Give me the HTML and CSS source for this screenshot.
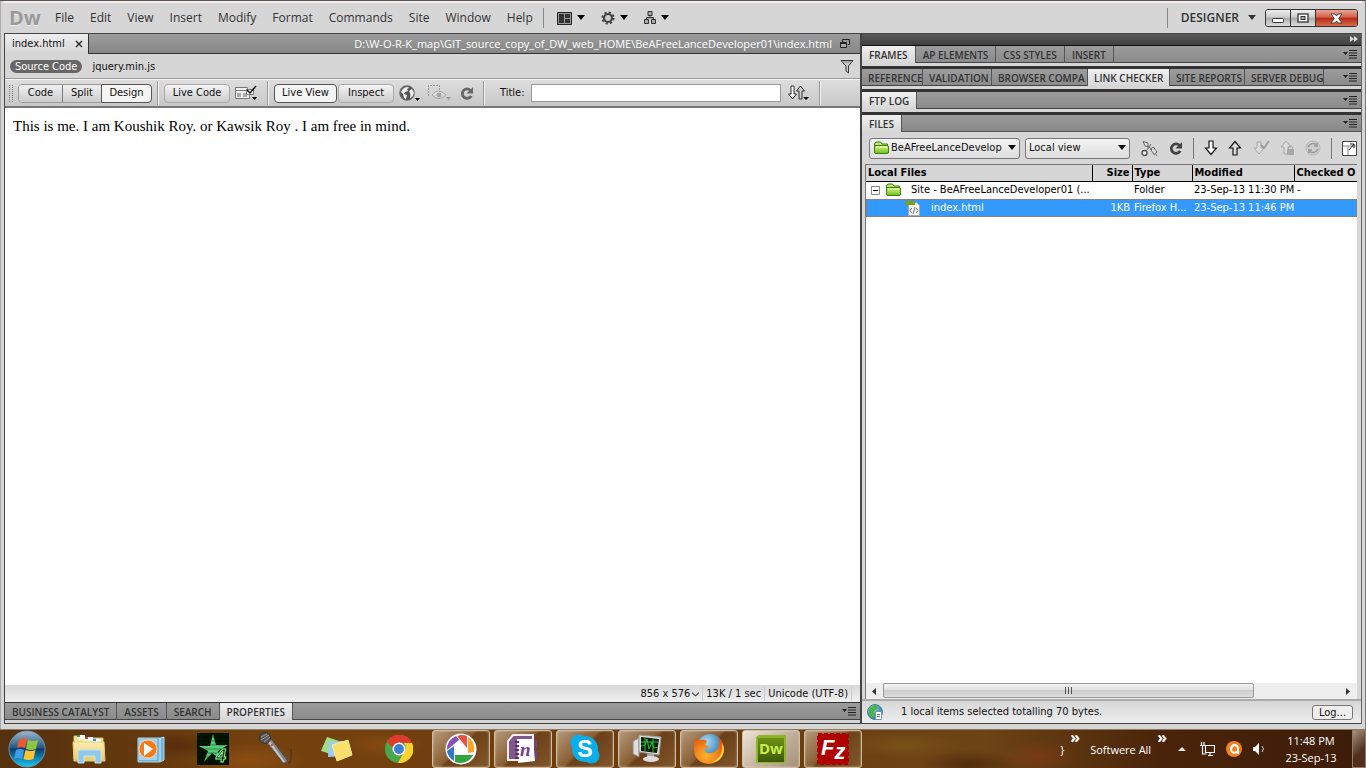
FILE: index.html
```html
<!DOCTYPE html>
<html lang="en">
<head>
<meta charset="utf-8">
<title>index.html - Dreamweaver</title>
<link rel="stylesheet" href="styles.css">
</head>
<body>
<svg class="defs" aria-hidden="true">
  <defs>
    <linearGradient id="g-orb" x1="0" y1="0" x2="0" y2="1"><stop offset="0" stop-color="#9fb9cc"/><stop offset=".45" stop-color="#2a5a86"/><stop offset=".5" stop-color="#0c3c6c"/><stop offset="1" stop-color="#16c8f8"/></linearGradient>
    <linearGradient id="g-folder" x1="0" y1="0" x2="0" y2="1"><stop offset="0" stop-color="#fdf0b4"/><stop offset="1" stop-color="#e8c964"/></linearGradient>
    <linearGradient id="g-green" x1="0" y1="0" x2="0" y2="1"><stop offset="0" stop-color="#d4f58a"/><stop offset="1" stop-color="#6cc11c"/></linearGradient>
    <linearGradient id="g-dw" x1="0" y1="0" x2="0" y2="1"><stop offset="0" stop-color="#6e9416"/><stop offset="1" stop-color="#3c5808"/></linearGradient>
    <radialGradient id="g-fire" cx=".4" cy=".7" r=".8"><stop offset="0" stop-color="#ffb52a"/><stop offset="1" stop-color="#e0480c"/></radialGradient>
    <radialGradient id="g-globe" cx=".35" cy=".3" r=".8"><stop offset="0" stop-color="#a9dcf2"/><stop offset="1" stop-color="#1464a4"/></radialGradient>
    <symbol id="panel-menu" viewBox="0 0 14 9"><path d="M0 2h5L2.500 5z" fill="#222"/><path d="M6 .5h8M6 3h8M6 5.500h8M6 8h8" stroke="#222"/></symbol>
    <symbol id="reload" viewBox="0 0 16 16"><path d="M12.500 5A5 5 0 1 0 13 10.500" fill="none" stroke="currentColor" stroke-width="3"/><path d="M15 1v7H8z" fill="currentColor"/></symbol>
    <symbol id="folder" viewBox="0 0 17 14"><path d="M1.500 11V3l1.500-2h4.500L9 3h5.500v3" fill="#b9e86c" stroke="#3f7d0c"/><rect x="1.500" y="4.500" width="14" height="8" rx="1.500" fill="url(#g-green)" stroke="#3f7d0c"/><path d="M3 6h11" stroke="#f0fccb"/></symbol>
    <symbol id="down" viewBox="0 0 14 16"><path d="M5 1h4v7h3.500L7 14.500 1.500 8H5z" fill="#fff" stroke="currentColor" stroke-width="1.200"/></symbol>
    <symbol id="up" viewBox="0 0 14 16"><path d="M5 15h4V8h3.500L7 1.500 1.500 8H5z" fill="#ddd" stroke="currentColor" stroke-width="1.200"/></symbol>
    <symbol id="caret" viewBox="0 0 8 6"><path d="M0 0h8L4 5z" fill="currentColor"/></symbol>
  </defs>
</svg>

<div class="window">
  <header class="menubar">
    <span class="logo">Dw</span>
    <nav class="menus">
      <button>File</button><button>Edit</button><button>View</button><button>Insert</button><button>Modify</button><button>Format</button><button>Commands</button><button>Site</button><button>Window</button><button>Help</button>
    </nav>
    <div class="menu-tools">
      <button aria-label="Layout"><svg width="15" height="13"><path d="M.5.5h14v12H.5z" fill="#999" stroke="#222"/><path d="M2 2h5v9H2zM8 2h5v4H8zM8 7h5v4H8z" fill="#333"/></svg><svg class="caret" width="8" height="6"><use href="#caret"/></svg></button>
      <button aria-label="Extend"><svg width="14" height="14" viewBox="0 0 14 14"><circle cx="7" cy="7" r="4" fill="#ccc" stroke="#444" stroke-width="2.200"/><circle cx="7" cy="7" r="5.600" fill="none" stroke="#444" stroke-width="2" stroke-dasharray="2.200 2.200"/></svg><svg class="caret" width="8" height="6"><use href="#caret"/></svg></button>
      <button aria-label="Site"><svg width="12" height="14"><path d="M4 .5h4v4H4zM.5 8.500h4v4h-4zM7.500 8.500h4v4h-4zM6 5v2M2.500 8V6.500h7V8" fill="#aaa" stroke="#333"/></svg><svg class="caret" width="8" height="6"><use href="#caret"/></svg></button>
    </div>
    <div class="workspace">
      <button class="designer">DESIGNER<svg width="8" height="6"><use href="#caret"/></svg></button>
      <div class="winbtns">
        <button aria-label="Minimize"><svg width="13" height="6"><rect x=".5" y=".5" width="11" height="4" rx="1" fill="#fff" stroke="#333"/></svg></button>
        <button aria-label="Restore"><svg width="12" height="10"><rect x="1" y="1" width="10" height="8" fill="#fff" stroke="#333" stroke-width="1.300"/><rect x="4" y="3.500" width="4" height="3" fill="#aaa" stroke="#333"/></svg></button>
        <button class="close" aria-label="Close"><svg width="13" height="11"><path d="M1 1h4l1.500 2L8 1h4L8.700 5.500 12 10H8L6.500 8 5 10H1l3.300-4.500z" fill="#fff" stroke="#444"/></svg></button>
      </div>
    </div>
  </header>

  <div class="workarea">
    <main class="document">
      <div class="doctabs">
        <div class="doctab"><span>index.html</span><button aria-label="Close tab"><svg width="8" height="8"><path d="m1 1 6 6M7 1 1 7" stroke="#222" stroke-width="1.300"/></svg></button></div>
        <span class="path">D:\W-O-R-K_map\GIT_source_copy_of_DW_web_HOME\BeAFreeLanceDeveloper01\index.html</span>
        <svg width="10" height="9"><path d="M2.500 3V.500h7v5H8" fill="none" stroke="#222"/><path d="M.5 3.500h6v5h-6zM.5 4.500h6" fill="#aaa" stroke="#222"/></svg>
      </div>
      <div class="related">
        <button class="pill">Source Code</button><button class="plain">jquery.min.js</button>
        <svg class="filter" width="14" height="15"><path d="M1 1.500h12L8.500 7v7L6 12V7z" fill="#ccc" stroke="#333"/><path d="M2 3h10" stroke="#888"/></svg>
      </div>
      <div class="toolbar">
        <i class="grip"></i>
        <div class="segmented"><button class="w-code">Code</button><button class="w-split">Split</button><button class="w-design on">Design</button></div>
        <i class="sep"></i>
        <button class="btn w-livecode">Live Code</button>
        <button class="tool" aria-label="Code options"><svg width="23" height="16"><path d="M.5 2.500h12v3H.5zM.5 5.500h14v8H.5z" fill="#eee" stroke="#777"/><path d="M2 8h4v4H2zM8 8h4v4H8z" fill="#aaa"/><path d="M11.500 4.500h7v5h-7z" fill="#fff" stroke="#777"/><path d="m12 5 3 3 6-7" fill="none" stroke="#111" stroke-width="1.500"/><path d="M17 12h5l-2.500 3z"/></svg></button>
        <i class="sep"></i>
        <button class="btn on w-liveview">Live View</button><button class="btn w-inspect">Inspect</button>
        <button class="tool" aria-label="Preview in browser"><svg width="21" height="17"><circle cx="8" cy="8" r="7" fill="#555" stroke="#666" stroke-width="1.500"/><path d="M3 5q2-3 6-3l1 1-2 1 1 2-3 1-1 2 3 1-1 4-2-1-1-4-2-2zM10 6l3-2 2 4-2 4-2 1 .5-4z" fill="#eee"/><path d="M16 13h5l-2.500 3z"/></svg></button>
        <button class="tool dim" aria-label="Visual aids"><svg width="23" height="17"><path d="M.5 11V.500h11V5" fill="none" stroke="#888" stroke-dasharray="2 1"/><path d="M4 10q6-8 14 0-7 7-14 0z" fill="#ddd" stroke="#999"/><circle cx="11" cy="10" r="2.500" fill="#999"/><path d="M18 12h5l-2.500 3z" fill="#888"/></svg></button>
        <button class="tool" aria-label="Refresh"><svg class="reload" width="15" height="15"><use href="#reload"/></svg></button>
        <i class="sep"></i>
        <label for="title">Title:</label><input id="title" type="text">
        <button class="tool" aria-label="File management"><svg width="22" height="17"><path d="M3 1h3v8h2.500l-4 5-4-5H3z" fill="#fff" stroke="#333"/><path d="M11 14V6H8.500l4-5 4 5H14v8z" fill="#ccc" stroke="#333"/><path d="M15 12h6l-3 3z"/></svg></button>
        <i class="sep"></i>
      </div>
      <article class="page">This is me. I am Koushik Roy. or Kawsik Roy . I am free in mind.</article>
      <div class="docstatus"><span class="size">856 x 576 <svg width="7" height="6"><path d="m0 1 3.500 3L7 1v1.500L3.500 5.500 0 2.500z" fill="#444"/></svg></span><span>13K / 1 sec</span><span>Unicode (UTF-8)</span></div>
      <div class="tabs bottom"><button>BUSINESS CATALYST</button><button>ASSETS</button><button>SEARCH</button><button class="on">PROPERTIES</button><svg class="pm" width="14" height="9"><use href="#panel-menu"/></svg></div>
    </main>

    <aside class="panels">
      <div class="collapse"><svg width="8" height="7"><path d="m0 0 4 3-4 3zM4 0l4 3-4 3z" fill="#ddd"/></svg></div>
      <div class="tabs"><button class="on">FRAMES</button><button>AP ELEMENTS</button><button>CSS STYLES</button><button>INSERT</button><svg class="pm" width="14" height="9"><use href="#panel-menu"/></svg></div>
      <div class="tabs fixed"><button class="w-ref">REFERENCE</button><button class="w-val">VALIDATION</button><button class="w-bro">BROWSER COMPA</button><button class="on w-link">LINK CHECKER</button><button class="w-site">SITE REPORTS</button><button class="w-srv">SERVER DEBUG</button><svg class="pm" width="14" height="9"><use href="#panel-menu"/></svg></div>
      <div class="tabs"><button class="on">FTP LOG</button><svg class="pm" width="14" height="9"><use href="#panel-menu"/></svg></div>
      <div class="tabs last"><button class="on">FILES</button><svg class="pm" width="14" height="9"><use href="#panel-menu"/></svg></div>
      <div class="filebar">
        <label class="picker site"><svg width="17" height="14"><use href="#folder"/></svg><select aria-label="Site"><option>BeAFreeLanceDevelop</option></select><svg class="arrow" width="8" height="6"><use href="#caret"/></svg></label>
        <label class="picker view"><select aria-label="View"><option>Local view</option></select><svg class="arrow" width="8" height="6"><use href="#caret"/></svg></label>
        <div class="filetools">
          <button aria-label="Connect"><svg width="17" height="17"><path d="M2 1.500 7 3v4L4 6zM7 6l4 4M9.500 9l3-2 3.500 5-3 2.500z" fill="#ddd" stroke="#666"/><path d="m6 10 4-6" stroke="#666"/><circle cx="3.500" cy="13" r="2.500" fill="#eee" stroke="#555" stroke-width="1.400"/><path d="m14 13 2 3" stroke="#777"/></svg></button>
          <button aria-label="Refresh files"><svg class="dark" width="15" height="15"><use href="#reload"/></svg></button>
          <i class="fsep"></i>
          <button aria-label="Get files"><svg width="14" height="16"><use href="#down"/></svg></button>
          <button aria-label="Put files"><svg width="14" height="16"><use href="#up"/></svg></button>
          <button class="dim" aria-label="Check out"><svg width="17" height="16"><path d="M4 2h4v6h3l-5 6-5-6h3z" fill="#ddd" stroke="#999"/><path d="m8 5 3 3 5-7" fill="none" stroke="#888" stroke-width="1.800"/></svg></button>
          <button class="dim" aria-label="Check in"><svg width="15" height="16"><path d="M4 14V7H1l5-6 5 6H8v7z" fill="#ddd" stroke="#999"/><path d="M7 9h7v6H7z" fill="#999"/><path d="M8.500 9V7q2-3 4 0v2" fill="none" stroke="#999"/></svg></button>
          <button class="dim" aria-label="Synchronize"><svg width="16" height="16"><circle cx="8" cy="8" r="7" fill="#ccc" stroke="#aaa"/><path d="M3 7q4-6 9-2V3M13 9q-4 6-9 2v2M9 6h4M3 10h4" fill="none" stroke="#888" stroke-width="1.500"/></svg></button>
          <i class="fsep"></i>
          <button aria-label="Expand"><svg width="15" height="15"><path d="M.5.5h14v14H.5z" fill="#fff" stroke="#444"/><path d="M1 5h13M6 5v9" stroke="#888"/><path d="m7 9 5-6M8 3h4v4" fill="none" stroke="#222"/></svg></button>
        </div>
      </div>
      <div class="filelist">
        <table>
          <colgroup><col class="c-name"><col class="c-size"><col class="c-type"><col class="c-mod"><col></colgroup>
          <thead><tr><th>Local Files</th><th class="num">Size</th><th>Type</th><th>Modified</th><th>Checked O</th></tr></thead>
          <tbody>
            <tr><td><div class="cell"><svg width="9" height="9"><path d="M.5.5h8v8h-8z" fill="#fff" stroke="#888"/><path d="M2 4.500h5" stroke="#000"/></svg><svg width="17" height="14"><use href="#folder"/></svg><span class="sitename">Site - BeAFreeLanceDeveloper01 (...</span></div></td><td></td><td>Folder</td><td>23-Sep-13 11:30 PM</td><td>-</td></tr>
            <tr class="selected"><td><div class="cell file"><svg width="16" height="16"><path d="M3.500 2.500h8l3 3v10h-11z" fill="#f4f4f0" stroke="#aaa"/><path d="M0 1h10v4H0z" fill="#7da116"/><path d="m7 8-2 2.500L7 13M11 8l2 2.500-2 2.500M10 7l-2 7" fill="none" stroke="#777"/></svg><span>index.html</span></div></td><td class="num">1KB</td><td>Firefox H...</td><td>23-Sep-13 11:46 PM</td><td></td></tr>
          </tbody>
        </table>
        <div class="hscroll"><svg width="5" height="7"><path d="M5 0v7L1 3.500z" fill="#333"/></svg><div class="track"><div class="thumb"><i></i><i></i><i></i></div></div><svg width="5" height="7"><path d="M0 0v7l4-3.500z" fill="#333"/></svg></div>
      </div>
      <div class="filestatus"><svg width="17" height="17"><circle cx="8" cy="8" r="7.500" fill="url(#g-globe)" stroke="#4a8298"/><path d="M2 5q3-4 7-4l2 3-4 3 1 4-3 3-3-4z" fill="#47b848"/><path d="M8.500 7.500h6v8h-6z" fill="#fff" stroke="#7893a4"/><path d="M10 10.500h3M10 12.500h3" stroke="#678"/></svg><span>1 local items selected totalling 70 bytes.</span><button>Log...</button></div>
    </aside>
  </div>
</div>

<footer class="taskbar">
  <button class="start" aria-label="Start"><svg width="38" height="38" viewBox="0 0 38 38"><circle cx="19" cy="19" r="18" fill="url(#g-orb)" stroke="#7391a5"/><path d="M11 10q4-3 8-1l-2 9q-4-2-8 0z" fill="#f0572a"/><path d="M20 10q5 2 10 0l-2 9q-5 2-10 0z" fill="#8cc63c"/><path d="M8 20q4-2 8 0l-2 9q-4-2-8 0z" fill="#3f9de8"/><path d="M17.500 20q5 2 10 0l-2 9q-5 2-10 0z" fill="#fdc42e"/></svg></button>
  <div class="apps">
    <button aria-label="Explorer"><svg width="34" height="32" viewBox="0 0 34 32"><path d="M2 3h10l1 2h18v21H2z" fill="#f5e3a0" stroke="#d9bd64"/><path d="M5 2h8v4H5zM12 4h9v4h-9zM20 6h9v4h-9z" fill="#fff"/><path d="M5 2h3v2H5z" fill="#2ca52c"/><path d="M13 4h3v2h-3z" fill="#d8452a"/><path d="M21 6h3v2h-3z" fill="#2a90d8"/><path d="M1 9h31l1 19H2z" fill="url(#g-folder)" stroke="#e6cd78"/><path d="M6 30V19q0-2 2-2h19q2 0 2 2v11h-6v-7H12v7z" fill="#8fc8e8" stroke="#bfe4f8"/></svg></button>
    <button aria-label="Media Player"><svg width="28" height="27" viewBox="0 0 28 27"><path d="M1 2h22l4-1v23l-4 2H1z" fill="#74b4dc" stroke="#a8d7ee"/><path d="M23 2v23" stroke="#d2edfa"/><path d="M2 3h18v21H2z" fill="#a6d2ea"/><circle cx="11" cy="13" r="9" fill="#f47a1a" stroke="#fdd0a0"/><path d="m7 7 9 6-9 7z" fill="#fff"/></svg></button>
    <button aria-label="Star"><svg width="32" height="32" viewBox="0 0 32 32"><path d="M0 0h32v32H0z" fill="#001400"/><path d="m16 1 3 11 12 0-10 6 1 7-7-5-8 9 4-11-9-5h11z" fill="#54cc74"/><path d="M0 4h32M0 8h32M0 12h32M0 16h32M0 20h32M0 24h32M0 28h32" stroke="#000" opacity=".35"/><text x="19" y="29" class="t-four">4</text></svg></button>
    <button aria-label="Microphone"><svg width="34" height="34" viewBox="0 0 34 34"><path d="m7 9 5-4 18 24-4 3z" fill="#858585" stroke="#454545"/><path d="m10 8 16 22" stroke="#c8c8c8" stroke-width="2"/><circle cx="7" cy="6" r="5.500" fill="#555" stroke="#333"/><path d="m3 5 6-3M3 8l8-5M6 10l6-5" stroke="#999"/><circle cx="14" cy="13" r="1" fill="#f22"/><path d="M30 31q4 2 3-14" fill="none" stroke="#333"/></svg></button>
    <button aria-label="Sticky Notes"><svg width="32" height="26" viewBox="0 0 32 26"><path d="m6 1 12 4-5 14-13-4z" fill="#a0dc88"/><path d="m8 6 13-1 1 15-15 1z" fill="#9ccdf4"/><path d="m11 9 16-5 4 15-15 6z" fill="#fbdf6b" stroke="#ffe99a"/></svg></button>
    <button aria-label="Chrome"><svg width="28" height="28" viewBox="0 0 28 28"><circle cx="14" cy="14" r="14" fill="#4aa84c"/><path d="M2 7A14 14 0 0 1 27 8H14a6 6 0 0 0-6 5z" fill="#de3a2e"/><path d="M27 8A14 14 0 0 1 13 28l6-11a6 6 0 0 0 0-9z" fill="#fbd22f"/><circle cx="14" cy="14" r="6.500" fill="#fff"/><circle cx="14" cy="14" r="5" fill="#3f7fd0"/></svg></button>
    <button class="open" aria-label="Picasa"><svg width="32" height="32" viewBox="0 0 32 32"><circle cx="16" cy="16" r="15.500" fill="#fff"/><path d="M11 3A14 14 0 0 0 2 17l12-10z" fill="#8851b8"/><path d="M12 3a14 14 0 0 1 10 0v12z" fill="#ea5146"/><path d="M23 4a14 14 0 0 1 6 15l-6 1z" fill="#f7a42b"/><path d="M10 22h18A14 14 0 0 1 10 29z" fill="#32a543"/><path d="m2 18 7-5v15A14 14 0 0 1 2 18z" fill="#3476c8"/></svg></button>
    <button class="open" aria-label="OneNote"><svg width="32" height="30" viewBox="0 0 32 30"><path d="M6 1h20v25H1V7z" fill="#80588e" stroke="#eee" stroke-width="2"/><path d="M27 6h3v7l-2 2 2 3v8h-3z" fill="#73437d"/><path d="M10 5h16l2 22-17 2z" fill="#fff"/><path d="M8 8h4M8 12h4M8 16h4M8 20h4M8 24h4" stroke="#573066" stroke-width="2"/><text x="13" y="22" class="t-one">n</text></svg></button>
    <button class="open" aria-label="Skype"><svg width="30" height="30" viewBox="0 0 30 30"><circle cx="15" cy="15" r="13" fill="#0baee8"/><circle cx="8.500" cy="8.500" r="8" fill="#0baee8"/><circle cx="21.500" cy="21.500" r="8" fill="#0baee8"/><text x="15" y="23" class="t-skype">S</text></svg></button>
    <button class="open" aria-label="Monitor"><svg width="32" height="30" viewBox="0 0 32 30"><path d="m2 7 6-3v19l-6-3z" fill="#ddd" stroke="#888"/><path d="m8 1 22 2-2 18-20-3z" fill="#d8dad8" stroke="#999"/><path d="m10 3 18 2-2 14-16-2z" fill="#0a200c"/><path d="m10 12 4-1 2-6 2 10 3-7 2 6 4-1M10 8h17M14 4v13M22 5v13" fill="none" stroke="#31b53c"/><path d="M16 20h7v4h-7z" fill="#aaa"/><ellipse cx="20" cy="25" rx="8" ry="3" fill="#ddd"/></svg></button>
    <button class="open" aria-label="Firefox"><svg width="32" height="32" viewBox="0 0 32 32"><circle cx="17" cy="14" r="13" fill="url(#g-globe)"/><path d="M2 6q3-1 5 1 4-1 7 1l-2 4q4 1 4 3l-5 1q1 5 7 4 6-1 8-8 1-5-2-9 6 5 7 12 0 14-15 16Q2 30 1 17 1 10 2 6z" fill="url(#g-fire)"/><path d="M29 10q2 15-12 20 12-1 14-12 0-5-2-8z" fill="#fdd240"/></svg></button>
    <button class="open active" aria-label="Dreamweaver"><svg width="30" height="28" viewBox="0 0 30 28"><path d="M0 2 3 0h27v26l-3 2H0z" fill="#8eb52a"/><path d="M2 3h26v24H2z" fill="url(#g-dw)"/><text x="15" y="19" class="t-dw">Dw</text></svg></button>
    <button class="open" aria-label="FileZilla"><svg width="32" height="32" viewBox="0 0 32 32"><path d="M1 1h30v30H1z" fill="#b00000" stroke="#b00000" stroke-width="2" stroke-dasharray="4 2"/><text x="4" y="22" class="t-fz">F<tspan dy="4">z</tspan></text></svg></button>
  </div>
  <div class="tray">
    <span class="brace">}</span><span class="chev">»</span><span class="soft">Softwere All</span><span class="chev">»</span>
    <svg width="8" height="4"><path d="M0 4h8L4 0z" fill="#eee"/></svg>
    <svg class="net" width="15" height="14"><path d="M5.500 3.500h9v7h-9zM8 13.500h5M10 11v2M0 3.500h5M1.500 0v3M4 0v3M2.500 4v8h4" fill="none" stroke="#fff" stroke-width="1.200"/></svg>
    <svg width="16" height="16"><circle cx="8" cy="8" r="8" fill="#f48120"/><path d="M11 11q-5 2-6-2 0-4 3-5 4 0 4 4v5" fill="none" stroke="#fff" stroke-width="2"/></svg>
    <svg width="13" height="12"><path d="M0 4h2l4-4v12L2 8H0z" fill="#fff"/><path d="M9 3q3 3 0 6" fill="none" stroke="#ccc"/></svg>
    <time>11:48 PM<br>23-Sep-13</time>
    <button class="desktop" aria-label="Show desktop"></button>
  </div>
</footer>
</body>
</html>
```
FILE: styles.css
```css
* { box-sizing: border-box; }
html, body { height: 100%; margin: 0; }
body { display: flex; flex-direction: column; overflow: hidden; background: #d6d6d6; color: #111; font: 11px/14px "DejaVu Sans Condensed", "Noto Sans", sans-serif; }
button { margin: 0; padding: 0; border: 0; background: none; color: inherit; font: inherit; white-space: nowrap; }
svg { display: block; flex: none; }
.defs { position: absolute; width: 0; height: 0; }

.window { flex: 1; min-height: 0; display: flex; flex-direction: column; padding: 0 4px 5px; background: #d6d6d6; border-top: 1px solid #5c5351; box-shadow: inset 1px 0 #aaa, inset -1px 0 #777; }

/* menu bar */
.menubar { flex: none; height: 32px; display: flex; align-items: center; border-top: 2px solid #f0f0f0; font: 12px/16px "Open Sans", sans-serif; color: #333; }
.logo { width: 44px; padding-left: 5px; font: bold 20px/24px "Open Sans", sans-serif; color: #999; text-shadow: 0 1px #eee; }
.menus { display: flex; gap: 16px; padding-left: 7px; }
.menu-tools { display: flex; gap: 16px; height: 20px; margin-left: 10px; padding-left: 13px; border-left: 1px solid #888; }
.menu-tools button { display: flex; align-items: center; gap: 5px; }
.menu-tools .caret { color: #000; }
.workspace { margin-left: auto; display: flex; align-items: center; height: 20px; padding-left: 13px; border-left: 1px solid #888; }
.designer { display: flex; align-items: center; gap: 9px; font-size: 12px; font-weight: 600; }
.winbtns { display: flex; margin: 0 4px 0 9px; border: 1px solid #333; border-radius: 3px; overflow: hidden; }
.winbtns button { width: 25px; height: 16px; display: flex; align-items: center; justify-content: center; border-right: 1px solid #333; background: linear-gradient(#eee, #ccc 45%, #aaa 50%, #ddd); }
.winbtns button:first-child { align-items: flex-end; padding-bottom: 2px; }
.winbtns .close { width: 41px; border: 0; background: linear-gradient(#eaa596, #d3604c 45%, #b52a14 50%, #d8694c); }

.workarea { flex: 1; min-height: 0; display: flex; border: 1px solid #444; border-right-color: #666; }
.document { flex: 1; min-width: 0; display: flex; flex-direction: column; background: #d6d6d6; }
.panels { flex: 0 1 501px; min-width: 0; display: flex; flex-direction: column; border-left: 2px solid #444; background: #d6d6d6; }

/* document header */
.doctabs { flex: none; height: 20px; display: flex; align-items: center; background: linear-gradient(#9c9c9c, #868686); border-bottom: 1px solid #333; padding-right: 10px; }
.doctab { align-self: stretch; margin-bottom: -1px; display: flex; align-items: center; gap: 10px; padding: 0 5px 0 7px; background: linear-gradient(#eee, #d6d6d6); border-right: 1px solid #333; }
.path { margin-left: auto; margin-right: 8px; color: #fff; white-space: nowrap; font: 11px/16px "Open Sans", sans-serif; }
.related { flex: none; height: 25px; display: flex; align-items: center; gap: 10px; padding: 1px 6px 0 5px; border-bottom: 1px solid #999; }
.pill { height: 13px; padding: 0 5px; border-radius: 7px; background: #666; color: #fff; line-height: 13px; }
.filter { margin-left: auto; }
.toolbar { flex: none; height: 29px; display: flex; align-items: center; padding: 0 4px; border-top: 1px solid #f4f4f4; border-bottom: 2px solid #777; background: linear-gradient(#ddd, #c8c8c8); }
.toolbar button, .toolbar input { flex: none; }
.grip { width: 4px; height: 17px; margin-right: 5px; border: dotted #777; border-width: 0 1px; }
.segmented { display: flex; border: 1px solid #999; border-radius: 4px; }
.segmented button { height: 17px; border-right: 1px solid #777; background: linear-gradient(#f0f0f0, #ccc); }
.segmented button:first-child { border-radius: 3px 0 0 3px; }
.segmented button.on { border: 1px solid #555; border-radius: 0 4px 4px 0; height: 19px; margin: -1px; background: #f4f4f4; }
.btn { height: 19px; border: 1px solid #aaa; border-radius: 4px; background: linear-gradient(#f4f4f4, #ccc); margin-right: 1px; }
.btn.on { border-color: #555; background: #f4f4f4; }
.w-code { width: 44px; } .w-split { width: 39px; } .w-design { width: 51px; }
.w-livecode { width: 66px; } .w-liveview { width: 63px; } .w-inspect { width: 56px; }
.sep { flex: none; width: 2px; height: 24px; margin: 0 5px; border-left: 1px solid #999; background: #f4f4f4; }
.tool { margin: 0 4px; }
.dim { opacity: .75; }
.reload { color: #666; } .dark { color: #444; }
.toolbar label { margin: 0 6px 0 10px; }
.toolbar input { width: 250px; height: 18px; padding: 0 3px; border: 1px solid #999; background: #fff; font: inherit; margin-right: 3px; }
.page { flex: 1; min-height: 0; padding: 9px 8px; background: #fff; color: #000; font: 15px/18px "Liberation Serif", serif; }
.docstatus { flex: none; height: 17px; display: flex; align-items: center; justify-content: flex-end; padding-right: 8px; background: linear-gradient(#d8d8d8, #f0f0f0); }
.docstatus span { padding: 0 3px; border-right: 1px solid #ccc; }
.docstatus .size { display: flex; align-items: center; gap: 2px; }

/* panel tabs */
.tabs { flex: none; height: 23px; display: flex; align-items: stretch; background: linear-gradient(#9c9c9c, #868686); border-bottom: 3px solid #333; box-shadow: inset 0 -3px #d6d6d6, inset 0 -4px #444; padding-bottom: 3px; font: 600 10px/16px "Open Sans", sans-serif; color: #333; }
.tabs button { padding: 0 7px; border-right: 1px solid #555; overflow: hidden; text-align: left; }
.tabs button.on { background: linear-gradient(#f0f0f0, #d6d6d6); }
.tabs.last { height: 17px; border-bottom: 0; padding-bottom: 0; box-shadow: inset 0 -1px #555; }
.tabs.bottom { height: 21px; border-top: 1px solid #333; border-bottom: 0; }
.tabs .pm { margin: 4px 4px 0 auto; }
.tabs.fixed button { padding: 0 0 0 6px; }
.w-ref { width: 61px; } .w-val { width: 69px; } .w-bro { width: 96px; }
.w-link { width: 82px; } .w-site { width: 75px; } .w-srv { width: 79px; }
.collapse { flex: none; height: 12px; display: flex; align-items: center; justify-content: flex-end; padding-right: 3px; background: linear-gradient(#5a5a5a, #404040); border-bottom: 1px solid #111; }

/* files panel */
.filebar { flex: none; height: 32px; display: flex; align-items: center; gap: 5px; padding: 0 4px 0 7px; }
.picker { flex: none; display: flex; align-items: center; height: 21px; padding: 0 3px; border: 1px solid #777; border-radius: 3px; background: linear-gradient(#f4f4f4, #ddd); }
.picker select { flex: 1; min-width: 0; appearance: none; border: 0; padding: 0; background: none; color: inherit; font: inherit; }
.site { width: 151px; gap: 1px; } .view { width: 105px; }
.filetools { flex: 1; display: flex; align-items: center; justify-content: space-between; padding-left: 6px; }
.fsep { width: 1px; height: 21px; background: #777; }
.filelist { flex: 1; min-height: 0; display: flex; flex-direction: column; margin: 0 4px 0 3px; background: #fff; border-top: 1px solid #777; border-left: 1px solid #777; color: #000; }
table { width: 100%; table-layout: fixed; border-collapse: collapse; }
th, td { padding: 0 2px; text-align: left; white-space: nowrap; overflow: hidden; }
th { height: 16px; background: #d6d6d6; border-right: 1px solid #000; border-bottom: 1px solid #000; }
td { height: 18px; }
td:last-child { padding-left: 3px; }
th:last-child { border-right: 0; }
.num { text-align: right; }
.c-name { width: 226px; } .c-size { width: 40px; } .c-type { width: 60px; } .c-mod { width: 102px; }
.cell { display: flex; align-items: center; gap: 5px; padding-left: 3px; }
.sitename { padding-left: 4px; }
.file { padding-left: 37px; gap: 10px; }
.selected { background: #3399ff; color: #fff; outline: 1px dotted #d06a10; outline-offset: -1px; }
.hscroll { margin-top: auto; height: 16px; display: flex; align-items: center; gap: 7px; padding: 0 6px 0 5px; background: #eee; }
.track { flex: 1; height: 16px; padding-right: 85px; }
.thumb { height: 15px; display: flex; justify-content: center; align-items: center; gap: 2px; border: 1px solid #999; border-radius: 2px; background: linear-gradient(#f4f4f4, #e0e0e0 45%, #ccc 50%, #ddd); }
.thumb i { width: 1px; height: 7px; background: #555; }
.filestatus { flex: none; height: 24px; display: flex; align-items: center; gap: 17px; padding: 0 8px 0 5px; border-top: 2px solid #aaa; background: linear-gradient(#d6d6d6, #eee); }
.filestatus button { margin-left: auto; width: 41px; height: 15px; border: 1px solid #777; border-radius: 3px; background: #eee; line-height: 13px; }

/* taskbar */
.taskbar { flex: none; height: 39px; display: flex; align-items: center; color: #fff; border-top: 1px solid #8a7a62; background: radial-gradient(ellipse 40px 16px at 76% 70%, #8c3c1880, transparent), radial-gradient(ellipse 60px 14px at 66% 40%, #84601c80, transparent), radial-gradient(ellipse 50px 14px at 71% 90%, #3c1c0890, transparent), radial-gradient(ellipse 50px 14px at 13% 40%, #4a240a90, transparent), radial-gradient(ellipse 60px 18px at 18% 80%, #a0581890, transparent), radial-gradient(ellipse 40px 14px at 28% 40%, #94501490, transparent), linear-gradient(90deg, #54300f, #75420e 20%, #6b3b10 50%, #6d4415 72%, #4a240a 85%, #3c1c09); }
.start { width: 56px; height: 38px; padding-left: 8px; margin-right: 4px; }
.apps { display: flex; gap: 4px; height: 38px; }
.apps button { width: 58px; display: flex; align-items: center; justify-content: center; }
.apps .open { border: 1px solid #d2bda0; border-radius: 3px; background: linear-gradient(135deg, #d8c8b4aa, #a07c5088 45%, #6b422088 50%, #8c673c99); box-shadow: inset 0 0 2px #fff8; }
.apps .active { background: linear-gradient(135deg, #eee3d6, #c5b59f 50%, #a49076); }
.tray { margin-left: auto; height: 38px; display: flex; align-items: center; font: 11px/17px "Open Sans", sans-serif; }
.tray svg { margin-left: 11px; }
.tray .net { margin-left: 14px; }
.tray .chev { align-self: flex-start; margin-left: 6px; font: bold 16px/14px "Open Sans", sans-serif; }
.soft { margin-left: 10px; }
.tray time { width: 62px; margin: 0 10px 0 14px; text-align: center; }
.desktop { width: 14px; height: 38px; border: 1px solid #937b6a; background: linear-gradient(135deg, #a48f80, #50301d 60%); }
.t-four { font: italic bold 18px "Liberation Sans", sans-serif; fill: #000; stroke: #8df59e; stroke-width: 1px; }
.t-one { font: italic bold 19px "Liberation Serif", serif; fill: #793c86; }
.t-skype { font: bold 23px "Liberation Sans", sans-serif; fill: #fff; text-anchor: middle; }
.t-dw { font: bold 15px "Open Sans", sans-serif; fill: #c8ee4c; text-anchor: middle; }
.t-fz { font: italic bold 22px "Liberation Sans", sans-serif; fill: #fff; }
```
